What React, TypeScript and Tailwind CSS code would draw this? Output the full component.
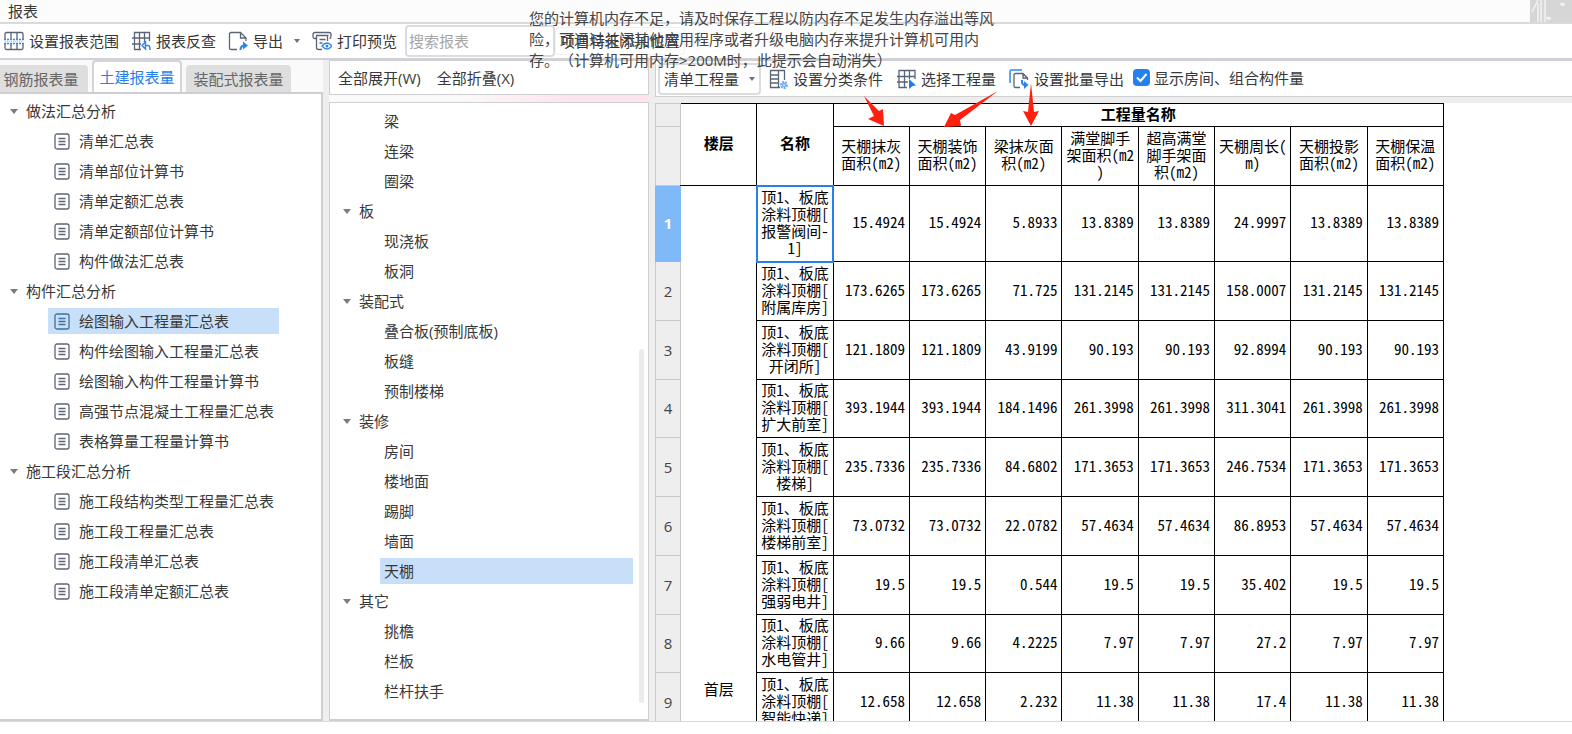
import { Fragment, type ReactNode } from "react";

type TreeNode = { label: string; children: string[] };

const reportTree: TreeNode[] = [
  {
    label: "做法汇总分析",
    children: ["清单汇总表", "清单部位计算书", "清单定额汇总表", "清单定额部位计算书", "构件做法汇总表"],
  },
  {
    label: "构件汇总分析",
    children: [
      "绘图输入工程量汇总表",
      "构件绘图输入工程量汇总表",
      "绘图输入构件工程量计算书",
      "高强节点混凝土工程量汇总表",
      "表格算量工程量计算书",
    ],
  },
  {
    label: "施工段汇总分析",
    children: ["施工段结构类型工程量汇总表", "施工段工程量汇总表", "施工段清单汇总表", "施工段清单定额汇总表"],
  },
];

// the first group is scrolled past its heading
const componentTree: TreeNode[] = [
  { label: "", children: ["梁", "连梁", "圈梁"] },
  { label: "板", children: ["现浇板", "板洞"] },
  { label: "装配式", children: ["叠合板(预制底板)", "板缝", "预制楼梯"] },
  { label: "装修", children: ["房间", "楼地面", "踢脚", "墙面", "天棚"] },
  { label: "其它", children: ["挑檐", "栏板", "栏杆扶手"] },
];

const columns = [
  "天棚抹灰\n面积(m2)",
  "天棚装饰\n面积(m2)",
  "梁抹灰面\n积(m2)",
  "满堂脚手\n架面积(m2\n)",
  "超高满堂\n脚手架面\n积(m2)",
  "天棚周长(\nm)",
  "天棚投影\n面积(m2)",
  "天棚保温\n面积(m2)",
];

const rows: { name: string; values: string[] }[] = [
  {
    name: "报警阀间-\n1]",
    values: ["15.4924", "15.4924", "5.8933", "13.8389", "13.8389", "24.9997", "13.8389", "13.8389"],
  },
  {
    name: "附属库房]",
    values: ["173.6265", "173.6265", "71.725", "131.2145", "131.2145", "158.0007", "131.2145", "131.2145"],
  },
  {
    name: "开闭所]",
    values: ["121.1809", "121.1809", "43.9199", "90.193", "90.193", "92.8994", "90.193", "90.193"],
  },
  {
    name: "扩大前室]",
    values: ["393.1944", "393.1944", "184.1496", "261.3998", "261.3998", "311.3041", "261.3998", "261.3998"],
  },
  {
    name: "楼梯]",
    values: ["235.7336", "235.7336", "84.6802", "171.3653", "171.3653", "246.7534", "171.3653", "171.3653"],
  },
  {
    name: "楼梯前室]",
    values: ["73.0732", "73.0732", "22.0782", "57.4634", "57.4634", "86.8953", "57.4634", "57.4634"],
  },
  { name: "强弱电井]", values: ["19.5", "19.5", "0.544", "19.5", "19.5", "35.402", "19.5", "19.5"] },
  { name: "水电管井]", values: ["9.66", "9.66", "4.2225", "7.97", "7.97", "27.2", "7.97", "7.97"] },
  { name: "智能快递]", values: ["12.658", "12.658", "2.232", "11.38", "11.38", "17.4", "11.38", "11.38"] },
];

function Icon({ children }: { children: ReactNode }) {
  return (
    <svg className="size-5 shrink-0" viewBox="0 0 20 20" fill="none" stroke="#5a6478" strokeWidth="1.3">
      {children}
    </svg>
  );
}

function RangeIcon() {
  return (
    <Icon>
      <path d="M1 8V3q0-1.500 1.500-1.500h15q1.500 0 1.500 1.500V8M1 13v4q0 1.500 1.500 1.500h15q1.500 0 1.500-1.500v-4M7 1.500V8M13 1.500V8M7 13v5.500M13 13v5.500" />
      <path d="M0 8.500h20M0 12.500h20" stroke="#2f86ea" strokeDasharray="2 1" />
      <path d="M1 10.500h18" stroke="#a9cdf8" strokeDasharray="1 1" />
    </Icon>
  );
}

function LookupIcon() {
  return (
    <Icon>
      <path d="M10 18.500H3.500V1.500h15V10M1 7h17.500M1 13h9M8.500 1.500v17M13.500 1.500V11" />
      <path d="M14.500 11 11 14.500l3.500 3.500zM14 14.500h3q2 0 2 4.500" stroke="#2f86ea" strokeWidth="1.500" />
    </Icon>
  );
}

function ExportIcon() {
  return (
    <Icon>
      <path d="M9 18.500H3q-1.500 0-1.500-1.500V3q0-1.500 1.500-1.500h9.500L18 7v3M12.500 1.500V7H18" />
      <path d="M12.500 19q0-4.500 4-4.500" stroke="#2f86ea" strokeWidth="2" />
      <path d="m15 10.500 5 4-5 4z" fill="#2f86ea" stroke="none" />
    </Icon>
  );
}

function PreviewIcon() {
  return (
    <Icon>
      <path d="M4 7.500H3q-2 0-2-2v-2q0-2 2-2h14q2 0 2 2v2q0 2-1.500 2M4 4.500h12.500M4.500 4.500v12q0 2 2 2H10M7.500 8.500h6M7.500 12h3M15.500 4.500V10" />
      <path d="M10 15q5-6 10 0-5 6-10 0z" stroke="#2f86ea" />
      <circle cx="15" cy="15" r="1.500" fill="#2f86ea" stroke="none" />
    </Icon>
  );
}

function CategoryIcon() {
  return (
    <Icon>
      <path d="M12 18.500H2.500v-17h14V11M2.500 6H10M2.500 10H10M2.500 14H10M10.500 1.500v17" />
      <circle cx="16" cy="16" r="3" stroke="#6ba9f5" strokeWidth="2" strokeDasharray="2 1" />
      <circle cx="16" cy="16" r="1.500" stroke="#6ba9f5" />
    </Icon>
  );
}

function SelectIcon() {
  return (
    <Icon>
      <path d="M11 18.500H3V1.500h16V10M1 7.500h18M1 13h11M8.500 1.500v17M13.500 1.500V10" />
      <path d="m13 10 7 6.500-3.500.5L13 20z" fill="#1d7bec" stroke="none" />
    </Icon>
  );
}

function BatchIcon() {
  return (
    <Icon>
      <path d="M13 1H2.500Q1 1 1 2.500V14" stroke="#2f86ea" strokeWidth="1.500" />
      <path d="M11 18.500H6.500q-1.500 0-1.500-1.500V6q0-1.500 1.500-1.500H14L18.500 9v2M14 4.500V9h4.500" />
      <path d="M13 11v2q0 3 3 3" stroke="#2f86ea" strokeWidth="2" />
      <path d="m15 12 4.500 4-4.500 4z" fill="#2f86ea" stroke="none" />
    </Icon>
  );
}

function DocIcon({ active }: { active: boolean }) {
  return (
    <svg
      className="h-[17px] w-4 shrink-0"
      viewBox="0 0 16 17"
      fill="none"
      stroke={active ? "#3f7199" : "#5e6474"}
      strokeWidth="1.300"
    >
      <rect x="1" y="1" width="14" height="15" rx="2" />
      <path d="M4.500 5.500h7M4.500 8.500h7M4.500 11.500h7" />
    </svg>
  );
}

function Caret() {
  return (
    <svg className="h-[5px] w-2 shrink-0" viewBox="0 0 8 5" fill="#7c7c7c">
      <path d="M0 0h8L4 5z" />
    </svg>
  );
}

function SmallCaret() {
  return (
    <svg className="h-1 w-1.5 shrink-0" viewBox="0 0 6 4" fill="#6c7280">
      <path d="M0 0h6L3 4z" />
    </svg>
  );
}

function ToolButton({ icon, label, children }: { icon: ReactNode; label: string; children?: ReactNode }) {
  return (
    <button className="flex shrink-0 items-center gap-[5px] whitespace-nowrap">
      {icon}
      {label}
      {children}
    </button>
  );
}

// callout arrows drawn over the first three quantity columns
function RedArrows() {
  return (
    <svg
      className="pointer-events-none absolute top-[23px] left-[207px] z-10 h-11 w-[182px]"
      viewBox="0 0 182 44"
      fill="#ff1f0f"
    >
      <path d="M2 13 17 28 21 26 22 43 6 36 12 33z" />
      <path d="M136 8 98 37 99 43 82 44 89 30 93 32z" />
      <path d="M169 0 172 29 177 28 169 43 161 28 166 29z" />
    </svg>
  );
}

export default function App() {
  return (
    <div className="flex h-screen min-w-[1200px] flex-col overflow-hidden bg-white font-['Open_Sans','Noto_Sans_CJK_SC',sans-serif] text-[15px] leading-5 text-[#383838]">
      {/* Title bar */}
      <header className="relative flex h-6 shrink-0 items-center justify-between border-b-2 border-[#d9dade] bg-[#fcfcfc] pl-2">
        <h1>报表</h1>
        <svg className="h-full w-[42px] bg-[#d6d6d6]" viewBox="0 0 42 22" stroke="#f2f2f2" fill="none">
          <path d="M2 12 8 0M8 3v19M11 0v22" strokeWidth="1.500" />
          <path d="M15 0v22" strokeWidth="1.500" />
          <path d="m16 18 3-1 2 1-2 2zM30 4l3-1 2 1-2 2z" fill="#f2f2f2" />
        </svg>
        {/* Low memory notice */}
        <div
          role="alert"
          className="pointer-events-none absolute top-2 left-[529px] z-20 w-[468px] leading-[21px] whitespace-pre-line text-[#444] [text-spacing-trim:space-all]"
        >
          {"您的计算机内存不足，请及时保存工程以防内存不足发生内存溢出等风\n险，可通过关闭其他应用程序或者升级电脑内存来提升计算机可用内\n存。（计算机可用内存>200M时，此提示会自动消失）"}
        </div>
      </header>

      {/* Toolbar */}
      <div className="flex h-9 shrink-0 items-center gap-3 border-b-2 border-[#d0d1d6] pl-1">
        <ToolButton icon={<RangeIcon />} label="设置报表范围" />
        <ToolButton icon={<LookupIcon />} label="报表反查" />
        <ToolButton icon={<ExportIcon />} label="导出">
          <span className="ml-1.5">
            <SmallCaret />
          </span>
        </ToolButton>
        <ToolButton icon={<PreviewIcon />} label="打印预览" />
        <input
          type="text"
          aria-label="搜索报表"
          placeholder="搜索报表"
          className="-ml-1 h-8 w-[150px] rounded border-2 border-[#dcdcdc] px-0.5 placeholder:text-[#a6a6a6]"
        />
        <button className="-ml-3 h-7 rounded border border-[#f1f1f1] px-1 text-[#333]">项目特征添加位置</button>
      </div>

      <div className="flex min-h-0 flex-1 bg-[#eee]">
        {/* Report list */}
        <aside className="flex w-[323px] shrink-0 flex-col">
          <div role="tablist" className="flex h-8 shrink-0 items-end bg-[#fafafa]">
            <button role="tab" className="h-[27px] w-[88px] rounded-tr bg-[#dedede] pr-1.5 text-[#666]">
              钢筋报表量
            </button>
            <button
              role="tab"
              aria-selected
              className="ml-1 h-8 w-[90px] rounded-t border-2 border-b-0 border-[#d5d5d9] bg-white text-[#2680eb]"
            >
              土建报表量
            </button>
            <button role="tab" className="ml-1 h-[27px] w-[105px] rounded-t bg-[#dedede] text-[#666]">
              装配式报表量
            </button>
          </div>
          <ul className="flex-1 border-t-2 border-r-2 border-b-2 border-[#cfcfd3] bg-white pt-0.5">
            {reportTree.map((group) => (
              <Fragment key={group.label}>
                <li className="flex h-[30px] items-center gap-2 pl-2.5">
                  <Caret />
                  {group.label}
                </li>
                {group.children.map((label) => {
                  const active = label === "绘图输入工程量汇总表";
                  return (
                    <li key={label} className="flex h-[30px] items-center pr-[42px] pl-12">
                      <a
                        href="#"
                        className={`flex h-[26px] flex-1 items-center gap-[9px] pl-1.5 whitespace-nowrap ${active ? "bg-[#c8dffa]" : ""}`}
                      >
                        <DocIcon active={active} />
                        {label}
                      </a>
                    </li>
                  );
                })}
              </Fragment>
            ))}
          </ul>
        </aside>

        {/* Component tree */}
        <section className="ml-1.5 flex w-80 shrink-0 flex-col">
          <div className="flex h-[35px] shrink-0 items-center gap-4 border border-[#cfcfd3] bg-white px-2">
            <button>全部展开(W)</button>
            <button>全部折叠(X)</button>
          </div>
          <div className="h-[7px] shrink-0 bg-gradient-to-r from-[#fafafa] from-40% to-[#fde4ef] to-75%" />
          <div className="relative min-h-0 flex-1 border border-b-2 border-[#cfcfd3] bg-white pt-[3px]">
            <ul>
              {componentTree.map((group) => (
                <Fragment key={group.label}>
                  {group.label && (
                    <li className="flex h-[30px] items-center gap-2 pl-[13px]">
                      <Caret />
                      {group.label}
                    </li>
                  )}
                  {group.children.map((label) => (
                    <li key={label} className="flex h-[30px] items-center pr-[15px] pl-[50px]">
                      <a
                        href="#"
                        className={`flex h-[26px] flex-1 items-center pl-1 ${label === "天棚" ? "bg-[#c8dffa]" : ""}`}
                      >
                        {label}
                      </a>
                    </li>
                  ))}
                </Fragment>
              ))}
            </ul>
            <div className="absolute right-1 bottom-4 h-[354px] w-[5px] rounded-full bg-[#ebebeb]" />
          </div>
        </section>

        {/* Quantities */}
        <main className="relative ml-1.5 flex min-w-0 flex-1 flex-col">
          <div className="flex h-[37px] shrink-0 items-center gap-[13px] border border-r-0 border-[#cfcfd3] bg-white pl-0.5">
            <button className="-mr-1.5 flex h-8 shrink-0 items-center gap-2.5 rounded border-2 border-[#dcdcdc] px-1">
              清单工程量
              <SmallCaret />
            </button>
            <ToolButton icon={<CategoryIcon />} label="设置分类条件" />
            <ToolButton icon={<SelectIcon />} label="选择工程量" />
            <ToolButton icon={<BatchIcon />} label="设置批量导出" />
            <label className="-ml-1 flex items-center gap-1 pb-0.5 whitespace-nowrap">
              <span className="relative flex size-[17px]">
                <input
                  type="checkbox"
                  defaultChecked
                  className="peer size-full appearance-none rounded-sm bg-[#ddd] checked:bg-[#2680eb]"
                />
                <svg
                  className="pointer-events-none absolute inset-0 hidden peer-checked:block"
                  viewBox="0 0 17 17"
                  fill="none"
                  stroke="#fff"
                  strokeWidth="2"
                >
                  <path d="m4 8.500 3.500 3.500L13.500 5" />
                </svg>
              </span>
              显示房间、组合构件量
            </label>
          </div>

          <div className="mt-1.5 min-h-0 flex-1 overflow-hidden bg-white">
            <table className="w-[789px] table-fixed border-collapse font-['Noto_Sans_CJK_SC',sans-serif] leading-[17px] text-black [font-feature-settings:'hwid']">
              <colgroup>
                <col className="w-[25px]" />
                <col span={10} />
              </colgroup>
              <thead>
                <tr className="h-[23px]">
                  <td className="border border-[#c9c9c9] bg-[#eee]" />
                  <th rowSpan={2} className="border border-black border-l-[#c9c9c9] pb-1">
                    楼层
                  </th>
                  <th rowSpan={2} className="border border-black pb-1">
                    名称
                  </th>
                  <th colSpan={8} className="border border-black pb-1">
                    工程量名称
                  </th>
                </tr>
                <tr className="h-[59px]">
                  <td className="border border-[#c9c9c9] bg-[#eee]" />
                  {columns.map((label) => (
                    <th key={label} className="border border-black pb-1 font-normal whitespace-pre">
                      {label}
                    </th>
                  ))}
                </tr>
              </thead>
              <tbody>
                {rows.map((row, i) => (
                  <tr key={row.name} className="h-[59px] first:h-[76px] nth-[4n]:h-[58px]">
                    <th
                      className={`border font-['Open_Sans',sans-serif] ${i === 0 ? "border-[#7fb9f8] bg-[#7fb9f8] text-white" : "border-[#c9c9c9] bg-[#eee] font-normal text-[#444]"}`}
                    >
                      {i + 1}
                    </th>
                    {i === 0 && (
                      <td
                        rowSpan={rows.length}
                        className="border border-black border-l-[#c9c9c9] pb-[34px] text-center align-bottom"
                      >
                        首层
                      </td>
                    )}
                    <td
                      className={`border border-black pb-1 text-center whitespace-pre ${i === 0 ? "outline-2 -outline-offset-1 outline-[#2680eb]" : ""}`}
                    >
                      {"顶1、板底\n涂料顶棚[\n" + row.name}
                    </td>
                    {row.values.map((value, j) => (
                      <td key={j} className="border border-black pr-1 pb-1 text-right">
                        {value}
                      </td>
                    ))}
                  </tr>
                ))}
              </tbody>
            </table>
          </div>
          <RedArrows />
        </main>
      </div>

      <footer className="h-[13px] shrink-0 border-t border-[#d9dade] bg-white" />
    </div>
  );
}
